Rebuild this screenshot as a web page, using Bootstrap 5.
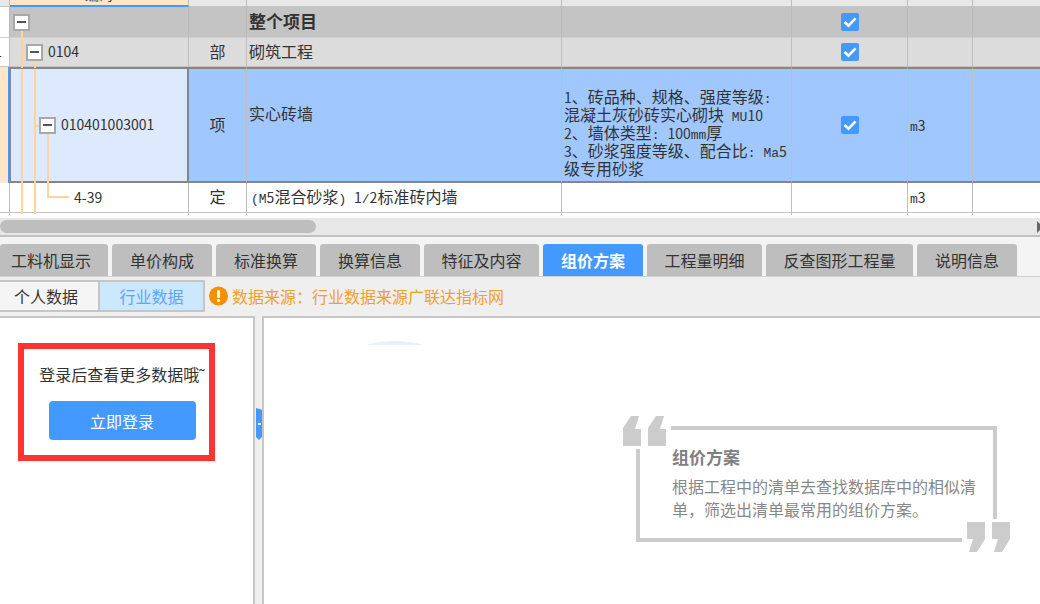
<!DOCTYPE html>
<html lang="zh-CN">
<head>
<meta charset="utf-8">
<meta name="viewport" content="width=device-width, initial-scale=1">
<title>组价方案</title>
<link href="https://cdn.jsdelivr.net/npm/bootstrap@5.3.0/dist/css/bootstrap.min.css" rel="stylesheet">
<style>
  body { font-family: "Noto Sans CJK SC", sans-serif; font-size: 16px; line-height: 18px; color: #333; background: #efefef; overflow: hidden; }

  /* bill of quantities grid */
  .bill { width: 100%; table-layout: fixed; border-collapse: separate; border-spacing: 0; background: #fff; }
  .bill th, .bill td { border-right: 1px solid #bebebe; border-bottom: 1px solid #c4c4c4; padding: 0 2px 2px; position: relative; font-weight: 400; vertical-align: middle; white-space: nowrap; }
  .bill th:last-child, .bill td:last-child { border-right: 0; }
  .bill th:first-child, .bill td:first-child { padding: 0; }
  .bill .head-row th { height: 7px; background: #e8e8e8; padding: 0; }
  .bill .head-row th:nth-child(2) { background: #ffe6c8; border-bottom: 2px solid #49f; }
  .cut-head { height: 5px; line-height: 22px; overflow: hidden; display: flex; align-items: flex-end; justify-content: center; font-size: 14px; }
  .cut-no { width: 2px; margin: 0; overflow: hidden; display: flex; justify-content: flex-end; font-size: 12px; }
  .bill .row-total td { height: 31px; background: #c4c4c4; border-right-color: #bababa; border-bottom-color: #d0d0d0; }
  .bill .row-part td { height: 29px; background: #dcdcdc; }
  .bill .row-total td:first-child, .bill .row-part td:first-child { background: #fff; }
  .bill .row-active td { height: 116px; background: #a0c8ff; border-top: 2px solid #868686; border-bottom: 2px solid #868686; }
  .bill .row-active td:first-child { background: #ffe6c8; border: 0; border-right: 2px solid #49f; }
  .bill .row-active td:nth-child(2) { background: #dde9fd; border-left: 1px solid #868686; border-right: 2px solid #868686; }
  .bill .row-item td { height: 30px; }
  .bill .row-item td:not(:first-child) { padding-bottom: 4px; }
  .bill .row-rest td { height: 2px; border-bottom: 0; padding: 0; }
  .bill td.has-tick { padding-bottom: 0; }
  .bill td.feature { padding: 14px 0 0 2px; }
  .bill td.total-name { font-size: 17px; font-weight: 700; }
  .num { font-size: 14px; line-height: 0; }
  .mono { font-family: "Liberation Mono", monospace; font-size: 13px; line-height: 0; }

  /* tree column */
  .tree { display: flex; align-items: center; gap: 5px; }
  .tree .num { line-height: 18px; padding-bottom: 2px; }
  .lv1 { padding-left: 3px; } .lv2 { padding-left: 16px; } .lv3 { padding-left: 28px; } .lv4 { padding-left: 64px; }
  .fold { width: 17px; height: 17px; flex: none; padding: 0; border: 2px solid #a8a8a8; background: #fff; position: relative; z-index: 1; display: flex; align-items: center; justify-content: center; }
  .fold::before { content: ""; width: 9px; height: 2px; background: #555; }
  .guide { position: absolute; top: 0; bottom: -2px; width: 2px; background: #fdd49c; z-index: 1; }
  .g1 { left: 11px; } .g2 { left: 24px; } .g3 { left: 37px; }
  .row-active .g1 { left: 10px; } .row-active .g2 { left: 23px; } .row-active .g3 { left: 36px; }
  .guide.from-mid { top: 50%; } .guide.to-mid { bottom: 50%; }
  .elbow { position: absolute; top: 50%; height: 2px; background: #fdd49c; }
  .e1 { left: 11px; width: 8px; } .e2 { left: 24px; width: 8px; } .e3 { left: 37px; width: 22px; margin-top: -2px; }
  .tick.form-check-input { width: 18px; height: 18px; margin: 0 auto; display: block; border-radius: 2px; border: 0; }
  .tick.form-check-input:checked { background-color: #49f; background-image: url("data:image/svg+xml,%3csvg xmlns='http://www.w3.org/2000/svg' viewBox='0 0 18 18'%3e%3cpath fill='none' stroke='%23fff' stroke-width='2.600' d='M3.500 9L7.500 12.700L14.500 5.300'/%3e%3c/svg%3e"); }

  /* horizontal scroll bar */
  .hscroll { height: 22px; background: #e7e7e7; border-top: 3px solid #fcfcff; border-bottom: 2px solid #c2c2c2; }
  .thumb { width: 316px; height: 13px; border-radius: 7px; background: #bebebe; }

  /* tabs */
  .tabs { height: 40px; gap: 4px; background: #f4f4f4; border-bottom: 1px solid #d0d0d0; padding-top: 7px; }
  .tab { border: 0; padding: 0; width: 100px; flex: none; background: #bebebe; border-radius: 3px 3px 0 0; color: #333; }
  .tab-first { width: 108px; padding-right: 6px; }
  .tab-5 { width: 115px; } .tab-7 { width: 147px; }
  .tab.active { background: #49f; color: #fff; font-weight: 700; }

  .source-bar { height: 39px; padding-top: 3px; }
  .src { height: 32px; padding: 0; border: 2px solid #c6c6c6; background: #f5f5f5; color: #333; }
  .src-own { width: 98px; border-left: 0; border-right: 0; padding-right: 6px; }
  .src-trade { width: 107px; background: #cce8ff; color: #5ea5fa; }
  .source-note { color: #f0a030; }

  /* lower panels */
  .side { width: 255px; background: #fff; border-top: 2px solid #c6c6c6; border-right: 2px solid #c6c6c6; padding: 25px 0 0 18px; }
  .login-box { width: 197px; height: 118px; border: 6px solid #f33; padding: 16px 0 0 11px; }
  .login-box p { margin-bottom: 18px; }
  .login-btn { width: 147px; height: 39px; background: #49f; color: #fff; border: 0; border-radius: 4px; padding: 0; }
  .login-btn:hover { background: #38e; color: #fff; }
  .splitter { width: 7px; position: relative; }
  .grip { position: absolute; left: 1px; top: 92px; }
  .main-pane { background: #fff; border-top: 2px solid #c6c6c6; border-left: 2px solid #c6c6c6; padding: 108px 43px 0 0; position: relative; overflow: hidden; }
  .arc { position: absolute; left: 102px; top: 22px; }
  .quote { width: 361px; height: 116px; border: 4px solid #ccc; position: relative; padding: 17px 0 0 32px; color: #888; }
  .quote h2 { font-size: 17px; line-height: 20px; font-weight: 700; margin: 0 0 8px; color: #808080; }
  .quote p { line-height: 23px; margin: 0; white-space: nowrap; }
  .mark-open, .mark-close { position: absolute; background: #fff; }
  .mark-open { left: -17px; top: -15px; }
  .mark-close { right: -17px; bottom: -15px; }
</style>
</head>
<body class="d-flex flex-column min-vh-100">
<table class="bill">
  <colgroup>
    <col style="width:10px"><col style="width:179px"><col style="width:58px"><col><col style="width:230px"><col style="width:116px"><col style="width:65px"><col style="width:67px">
  </colgroup>
  <thead>
    <tr class="head-row"><th></th><th><div class="cut-head">编码</div></th><th></th><th></th><th></th><th></th><th></th><th></th></tr>
  </thead>
  <tbody>
    <tr class="row-total">
      <td></td>
      <td class="p-0"><i class="guide g1 from-mid"></i><div class="tree lv1"><button class="fold" aria-label="折叠整个项目"></button></div></td>
      <td></td>
      <td class="total-name">整个项目</td>
      <td></td>
      <td class="has-tick"><input class="form-check-input tick" type="checkbox" checked aria-label="整个项目"></td>
      <td></td><td></td>
    </tr>
    <tr class="row-part">
      <td><div class="cut-no">1</div></td>
      <td class="p-0"><i class="guide g1"></i><i class="elbow e1"></i><i class="guide g2 from-mid"></i><div class="tree lv2"><button class="fold" aria-label="折叠0104"></button><span class="num">0104</span></div></td>
      <td class="text-center">部</td>
      <td>砌筑工程</td>
      <td></td>
      <td class="has-tick"><input class="form-check-input tick" type="checkbox" checked aria-label="砌筑工程"></td>
      <td></td><td></td>
    </tr>
    <tr class="row-active">
      <td></td>
      <td class="p-0"><i class="guide g1"></i><i class="guide g2"></i><i class="elbow e2"></i><i class="guide g3 from-mid"></i><div class="tree lv3"><button class="fold" aria-label="折叠010401003001"></button><span class="num">010401003001</span></div></td>
      <td class="text-center">项</td>
      <td class="pb-4">实心砖墙</td>
      <td class="feature"><span class="num">1</span>、砖品种、规格、强度等级<span class="mono">:</span><br>混凝土灰砂砖实心砌块<span class="mono"> MU</span><span class="num">10</span><br><span class="num">2</span>、墙体类型<span class="mono">: </span><span class="num">100</span><span class="mono">mm</span>厚<br><span class="num">3</span>、砂浆强度等级、配合比<span class="mono">: Ma</span><span class="num">5</span><br>级专用砂浆</td>
      <td class="has-tick"><input class="form-check-input tick" type="checkbox" checked aria-label="实心砖墙"></td>
      <td><span class="mono">m</span><span class="num">3</span></td><td></td>
    </tr>
    <tr class="row-item">
      <td></td>
      <td class="p-0"><i class="guide g1"></i><i class="guide g2"></i><i class="guide g3 to-mid"></i><i class="elbow e3"></i><div class="tree lv4"><span class="num">4-39</span></div></td>
      <td class="text-center">定</td>
      <td class="ps-1"><span class="mono">(M</span><span class="num">5</span>混合砂浆<span class="mono">) </span><span class="num">1</span><span class="mono">/</span><span class="num">2</span>标准砖内墙</td>
      <td></td><td></td>
      <td><span class="mono">m</span><span class="num">3</span></td><td></td>
    </tr>
    <tr class="row-rest"><td></td><td></td><td></td><td></td><td></td><td></td><td></td><td></td></tr>
  </tbody>
</table>

<div class="hscroll d-flex justify-content-between align-items-center">
  <div class="thumb"></div>
  <svg width="3" height="12" viewBox="0 0 3 12"><path d="M0 0L3 3V9L0 12Z" fill="#666"/></svg>
</div>

<nav class="tabs d-flex" aria-label="明细">
  <button class="tab tab-first">工料机显示</button>
  <button class="tab">单价构成</button>
  <button class="tab">标准换算</button>
  <button class="tab">换算信息</button>
  <button class="tab tab-5">特征及内容</button>
  <button class="tab active" aria-current="true">组价方案</button>
  <button class="tab tab-5">工程量明细</button>
  <button class="tab tab-7">反查图形工程量</button>
  <button class="tab">说明信息</button>
</nav>

<div class="source-bar d-flex">
  <button class="src src-own">个人数据</button>
  <button class="src src-trade">行业数据</button>
  <div class="source-note d-flex align-items-center ps-1 pb-1 gap-1">
    <svg width="19" height="20" viewBox="0 0 19 20"><circle cx="9.5" cy="10" r="9.5" fill="#f59000"/><path d="M9.500 5.500V10.500" stroke="#fff" stroke-width="3" stroke-linecap="round"/><circle cx="9.500" cy="14.500" r="1.500" fill="#fff"/></svg>
    <span>数据来源：行业数据来源广联达指标网</span>
  </div>
</div>

<div class="d-flex flex-grow-1">
  <aside class="side flex-shrink-0">
    <div class="login-box text-center">
      <p class="text-nowrap">登录后查看更多数据哦˜</p>
      <button class="btn login-btn">立即登录</button>
    </div>
  </aside>
  <div class="splitter flex-shrink-0">
    <svg class="grip" width="7" height="32" viewBox="0 0 7 32"><path d="M0 0L7 2V28L3 32L0 29Z" fill="#49f"/><rect x="2" y="15" width="3" height="2" fill="#fff"/></svg>
  </div>
  <main class="main-pane flex-grow-1 d-flex justify-content-end align-items-start">
    <svg class="arc" width="58" height="5" viewBox="0 0 58 5"><path d="M0 5Q29 -3 58 5Z" fill="#e6f1fd"/></svg>
    <section class="quote">
      <svg class="mark-open" width="48" height="34" viewBox="0 0 48 34"><path d="M0 31V13L8 1H16L12 14H18V31ZM25 31V13L33 1H41L37 14H43V31Z" fill="#ccc"/></svg>
      <h2>组价方案</h2>
      <p>根据工程中的清单去查找数据库中的相似清<br>单，筛选出清单最常用的组价方案。</p>
      <svg class="mark-close" width="48" height="34" viewBox="0 0 48 34"><path d="M5 3H23V20L15 33H7L11 20H5ZM30 3H48V20L40 33H32L36 20H30Z" fill="#ccc"/></svg>
    </section>
  </main>
</div>
<script src="https://cdn.jsdelivr.net/npm/bootstrap@5.3.0/dist/js/bootstrap.bundle.min.js"></script>
</body>
</html>
